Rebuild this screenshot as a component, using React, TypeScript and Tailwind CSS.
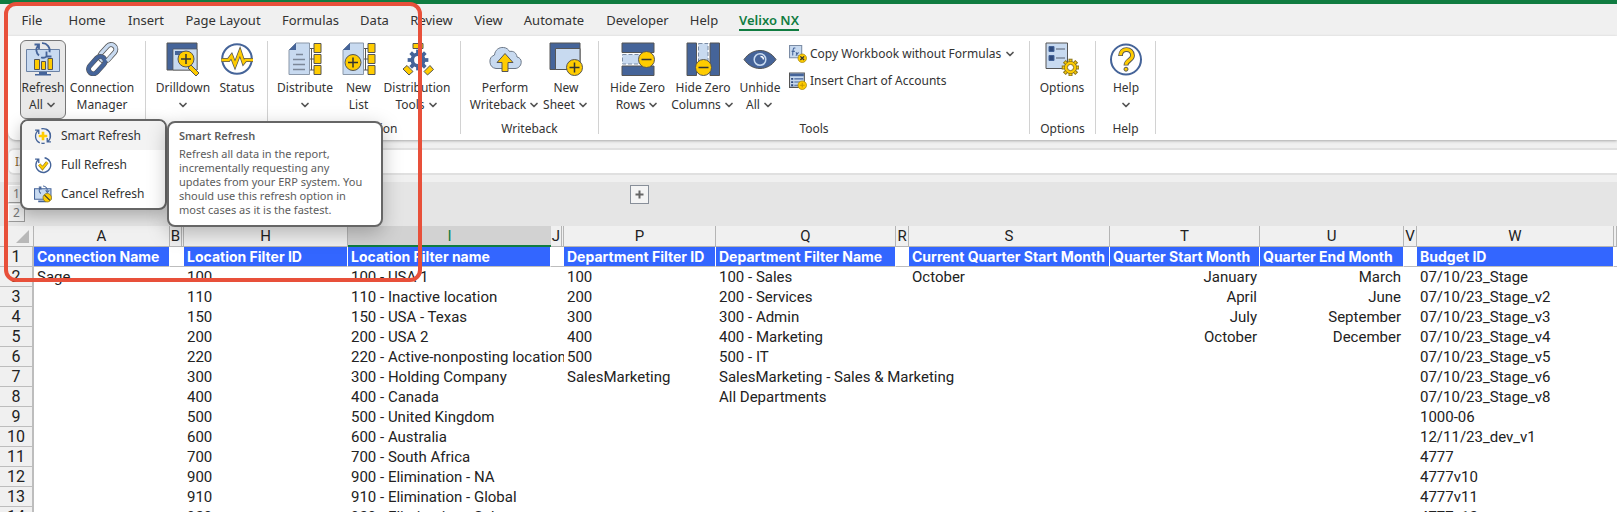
import { ChevronDown } from "lucide-react";
import type { ReactNode } from "react";

const BLUE = "#456499";
const LIGHT = "#c8daf0";
const YELLOW = "#ffcc00";
const LINE = "#555555";

const tabs = [
  { name: "File", width: "w-[48px]" },
  { name: "Home", width: "w-[62px]" },
  { name: "Insert", width: "w-[56px]" },
  { name: "Page Layout", width: "w-[98px]" },
  { name: "Formulas", width: "w-[77px]" },
  { name: "Data", width: "w-[51px]" },
  { name: "Review", width: "w-[63px]" },
  { name: "View", width: "w-[51px]" },
  { name: "Automate", width: "w-[80px]" },
  { name: "Developer", width: "w-[87px]" },
  { name: "Help", width: "w-[46px]" },
  { name: "Velixo NX", width: "w-[84px]", active: true },
];

// "hidden" marks a column that is followed by collapsed ones
const columns = [
  { letter: "A", width: "w-[136px]", title: "Connection Name" },
  { letter: "B", width: "w-[14px]", gap: true, hidden: true },
  { letter: "H", width: "w-[164px]", title: "Location Filter ID" },
  { letter: "I", width: "w-[203px]", title: "Location Filter name", selected: true },
  { letter: "J", width: "w-[13px]", gap: true, hidden: true },
  { letter: "P", width: "w-[152px]", title: "Department Filter ID" },
  { letter: "Q", width: "w-[180px]", title: "Department Filter Name" },
  { letter: "R", width: "w-[13px]", gap: true },
  { letter: "S", width: "w-[201px]", title: "Current Quarter Start Month" },
  { letter: "T", width: "w-[150px]", title: "Quarter Start Month", right: true },
  { letter: "U", width: "w-[144px]", title: "Quarter End Month", right: true },
  { letter: "V", width: "w-[13px]", gap: true },
  { letter: "W", width: "w-[197px]", title: "Budget ID" },
  { letter: "", width: "", gap: true },
];

const rows: Record<string, string>[] = [
  { A: "Sage", H: "100", I: "100 - USA 1", P: "100", Q: "100 - Sales", S: "October", T: "January", U: "March", W: "07/10/23_Stage" },
  { H: "110", I: "110 - Inactive location", P: "200", Q: "200 - Services", T: "April", U: "June", W: "07/10/23_Stage_v2" },
  { H: "150", I: "150 - USA - Texas", P: "300", Q: "300 - Admin", T: "July", U: "September", W: "07/10/23_Stage_v3" },
  { H: "200", I: "200 - USA 2", P: "400", Q: "400 - Marketing", T: "October", U: "December", W: "07/10/23_Stage_v4" },
  { H: "220", I: "220 - Active-nonposting location", P: "500", Q: "500 - IT", W: "07/10/23_Stage_v5" },
  { H: "300", I: "300 - Holding Company", P: "SalesMarketing", Q: "SalesMarketing - Sales & Marketing", W: "07/10/23_Stage_v6" },
  { H: "400", I: "400 - Canada", Q: "All Departments", W: "07/10/23_Stage_v8" },
  { H: "500", I: "500 - United Kingdom", W: "1000-06" },
  { H: "600", I: "600 - Australia", W: "12/11/23_dev_v1" },
  { H: "700", I: "700 - South Africa", W: "4777" },
  { H: "900", I: "900 - Elimination - NA", W: "4777v10" },
  { H: "910", I: "910 - Elimination - Global", W: "4777v11" },
  { H: "920", I: "920 - Elimination - Sub", W: "4777v12" },
];

const Svg = ({ size = 34, children }: { size?: number; children: ReactNode }) => (
  <svg width={size} height={size} viewBox="0 0 34 34" fill="none" aria-hidden="true" className="shrink-0">
    {children}
  </svg>
);

const Plus = ({ cx, cy, r = 8 }: { cx: number; cy: number; r?: number }) => (
  <g>
    <circle cx={cx} cy={cy} r={r} fill={YELLOW} stroke={LINE} />
    <path d={`M${cx - 5} ${cy}h10M${cx} ${cy - 5}v10`} stroke="#333" strokeWidth="1.5" />
  </g>
);

const Minus = ({ cx, cy }: { cx: number; cy: number }) => (
  <g>
    <circle cx={cx} cy={cy} r="8" fill={YELLOW} stroke={LINE} />
    <path d={`M${cx - 5} ${cy}h10`} stroke="#333" strokeWidth="1.5" />
  </g>
);

// two arcs with arrow heads, drawn inside a 34 unit box
const Arrows = ({ width = 2.5 }: { width?: number }) => (
  <g stroke={BLUE} strokeWidth={width}>
    <path d="M11 30A14 14 0 0 1 8 6.500M2 6h7v7" />
    <path d="M14 3.300A14 14 0 0 1 30.500 20" />
    <path d="M23 4A14 14 0 0 1 26 27.500M32 28h-7v-7" />
    <path d="M20 30.700A14 14 0 0 1 14 30.500" />
  </g>
);

const gearTeeth = [0, 45, 90, 135, 180, 225, 270, 315];

const Gear = ({ cx, cy, r, fill, stroke = "none" }: { cx: number; cy: number; r: number; fill: string; stroke?: string }) => (
  <g>
    {gearTeeth.map((a) => (
      <rect
        key={a}
        x={cx - r * 0.25}
        y={cy - r * 1.38}
        width={r * 0.5}
        height={r * 0.7}
        fill={fill}
        stroke={stroke}
        transform={`rotate(${a} ${cx} ${cy})`}
      />
    ))}
    <circle cx={cx} cy={cy} r={r} fill={fill} stroke={stroke} />
    <circle cx={cx} cy={cy} r={r * 0.9} fill={fill} />
    <circle cx={cx} cy={cy} r={r * 0.52} fill="#fff" stroke={stroke} />
  </g>
);

const RefreshAllIcon = () => (
  <Svg>
    <path d="M.5 7.500h33v22H.5z" fill={LIGHT} stroke="#6b82a5" />
    <path d="M13 30h8v3h-8zM9 32h16v1.500H9z" fill={BLUE} />
    <path d="M8.500 17.500h5v10h-5zM15.500 19.500h4v8h-4zM22 16.500h4.500v11H22z" fill={YELLOW} stroke={LINE} />
    <path d="M13 13.500a7 7 0 0 1-1-10M8.500 2.500h4.500v4.500M16 1.200a7.300 7.300 0 0 1 7.500 9M20 14.500h4.500M20.500 9.500v5h5M15 15.500a7 7 0 0 0 5-.500" stroke={BLUE} strokeWidth="1.800" />
  </Svg>
);

const LinkIcon = () => (
  <Svg>
    <g transform="rotate(42 17 17)" fill="none">
      <rect x="12.500" y="-1" width="9.500" height="19" rx="4.750" stroke={LINE} strokeWidth="5" />
      <rect x="12.500" y="-1" width="9.500" height="19" rx="4.750" stroke={LIGHT} strokeWidth="3.400" />
      <rect x="12.500" y="15" width="9.500" height="20" rx="4.750" stroke={LINE} strokeWidth="5" />
      <rect x="12.500" y="15" width="9.500" height="20" rx="4.750" stroke={BLUE} strokeWidth="4" />
      <path d="M22 9v6" stroke={LIGHT} strokeWidth="3.400" />
    </g>
  </Svg>
);

const DrilldownIcon = () => (
  <Svg>
    <path d="M1 1h30v27H1z" fill={BLUE} stroke={LINE} />
    <path d="M7 7h24v21H7z" fill={LIGHT} stroke={LINE} strokeWidth=".7" />
    <path d="M9 9h11v4H9z" fill={BLUE} />
    <path d="m25 23 8 8-3 3-8-8z" fill={YELLOW} stroke={LINE} />
    <Plus cx={20} cy={17} />
  </Svg>
);

const StatusIcon = () => (
  <Svg>
    <circle cx="17" cy="17" r="14.800" fill="#fff" stroke={BLUE} strokeWidth="2" />
    <path d="M1.500 18h7l3-4 3.500 9 5-13 3.500 10.500 2-2.500H33" stroke={LINE} strokeWidth="4" />
    <path d="M1.500 18h7l3-4 3.500 9 5-13 3.500 10.500 2-2.500H33" stroke={YELLOW} strokeWidth="2.500" />
  </Svg>
);

const Sheet = () => (
  <g>
    <path d="M8 1h13.500v31.500H1V8z" fill={LIGHT} stroke="#8a97a8" />
    <path d="M8 1v7H1z" fill={BLUE} />
    <path d="M22 6.500h5M22 17h5M22 28h5M23.500 6.500V28" stroke={LINE} />
    <path d="M26 1.500h7v9h-7zM26 12.500h7v9h-7zM26 23.500h7v9h-7z" fill={YELLOW} stroke={LINE} />
  </g>
);

const DistributeIcon = () => (
  <Svg>
    <Sheet />
    <path d="M8 12.500h7M5 17.500h12M5 22.500h12M5 27.500h12" stroke="#7b8798" strokeWidth="1.400" />
  </Svg>
);

const NewListIcon = () => (
  <Svg>
    <Sheet />
    <Plus cx={11} cy={20.500} />
  </Svg>
);

const DistToolsIcon = () => (
  <Svg>
    <Gear cx={18} cy={18} r={7.500} fill={BLUE} />
    <path d="M13 1.500h10v5H13z" fill={YELLOW} stroke={LINE} />
    <path d="m3 27 4-3.500 6 6L9 33zM24 29.500l6-6 3.500 4-6 5.500z" fill={YELLOW} stroke={LINE} />
  </Svg>
);

const CloudIcon = () => (
  <Svg>
    <path d="M8 26.500a7 7 0 0 1-1.500-13.500C7 8 11 5 15.500 5.500c3 .2 5 2 6 4 4-1 7 1.500 7.500 5.500 3 .5 4.500 3 4.200 5.500-.2 3.500-3 6-6.200 6z" fill={LIGHT} stroke="#6b7787" />
    <path d="m17 11.500 8 9h-5v9h-6v-9H9z" fill={YELLOW} stroke={LINE} />
  </Svg>
);

const NewSheetIcon = () => (
  <Svg>
    <path d="M1 1h30v26.500H1z" fill={BLUE} stroke={LINE} />
    <path d="M6.500 6.500H31v21H6.500z" fill={LIGHT} stroke={LINE} />
    <Plus cx={25.500} cy={25.500} />
  </Svg>
);

const HideRowsIcon = () => (
  <Svg>
    <path d="M1 1h32v9.500H1zM1 24h32v9.500H1z" fill={BLUE} stroke={LINE} />
    <path d="M1.500 12.500h24v9.500h-24z" fill={LIGHT} stroke="#7b8ca5" strokeDasharray="4 2" />
    <Minus cx={25.500} cy={17.500} />
  </Svg>
);

const HideColsIcon = () => (
  <Svg>
    <path d="M1 1h9.500v32.500H1zM24 1h9.500v32.500H24z" fill={BLUE} stroke={LINE} />
    <path d="M12.500 1.500H22v24h-9.500z" fill={LIGHT} stroke="#7b8ca5" strokeDasharray="4 2" />
    <Minus cx={17.500} cy={25.500} />
  </Svg>
);

const EyeIcon = () => (
  <Svg>
    <path d="M1 17.500C9 5.500 25 5.500 33 17.500 25 29.500 9 29.500 1 17.500z" fill={BLUE} stroke={LINE} />
    <circle cx="17" cy="17.500" r="5.800" stroke={LIGHT} strokeWidth="1.500" />
    <path d="M17.500 14.500a3 3 0 0 1 3 3" stroke="#fff" strokeWidth="1.500" />
  </Svg>
);

const OptionsIcon = () => (
  <Svg>
    <path d="M1 1h21.500v25.500H1z" fill={LIGHT} stroke={LINE} />
    <path d="M4 4.500h5v5H4zM4 13.500h5v5H4z" fill="#2f4a7c" stroke={BLUE} />
    <path d="M11 7h9M11 16h9" stroke="#7b8798" strokeWidth="1.300" />
    <Gear cx={25.500} cy={25.500} r={6} fill={YELLOW} stroke="#8a7620" />
  </Svg>
);

const HelpIcon = () => (
  <Svg>
    <circle cx="17" cy="17.500" r="15" fill="#fff" stroke={BLUE} strokeWidth="2" />
    <path d="M11.500 14c0-8.500 12-8.500 12-.5 0 5-6.500 4.500-6.500 10" stroke={LINE} strokeWidth="4.800" />
    <path d="M11.500 13.300c0-7.800 12-7.800 12 .2 0 5-6.500 4.500-6.500 9.300" stroke={YELLOW} strokeWidth="3" />
    <circle cx="17" cy="27.200" r="2" fill={YELLOW} stroke={LINE} />
  </Svg>
);

const CopyIcon = () => (
  <Svg size={18}>
    <path d="M1 1h23v23H1z" fill={LIGHT} stroke="#7b8ca5" strokeWidth="2" />
    <path d="M12 6c-4-2-5 3-5 14M5 12h6M13 14l5 6M18 14l-5 6" stroke={BLUE} strokeWidth="2" />
    <circle cx="25" cy="25" r="8" fill={YELLOW} stroke="#a88a10" strokeWidth="1.500" />
    <path d="m21.500 21.500 7 7M28.500 21.500l-7 7" stroke="#333" strokeWidth="2.500" />
  </Svg>
);

const InsertChartIcon = () => (
  <Svg size={18}>
    <path d="M1 2h28v27H1z" fill={LIGHT} stroke={LINE} strokeWidth="2" />
    <path d="M2 3h26v5H2z" fill={BLUE} />
    <path d="M4 13h4M4 19h4M4 25h4" stroke="#2f4a7c" strokeWidth="3.500" />
    <path d="M10 13h17M10 19h17M10 25h17" stroke={BLUE} strokeWidth="2" />
    <circle cx="25" cy="25" r="8" fill={YELLOW} stroke="#a88a10" strokeWidth="1.500" />
    <path d="M25 20.500v9M20.500 25h9" stroke="#c79a00" strokeWidth="2" />
  </Svg>
);

const SmartRefreshIcon = () => (
  <Svg size={18}>
    <Arrows />
    <path d="M17 9v16M9 17h16" stroke={YELLOW} strokeWidth="5" />
  </Svg>
);

const FullRefreshIcon = () => (
  <Svg size={18}>
    <path d="M9 6A14 14 0 1 0 20 3.300M2 6h7v7" stroke={BLUE} strokeWidth="2.500" />
    <path d="m10 16 6 7 9-11" stroke="#8a7620" strokeWidth="6" />
    <path d="m10 16 6 7 9-11" stroke={YELLOW} strokeWidth="4" />
  </Svg>
);

const CancelRefreshIcon = () => (
  <Svg size={18}>
    <path d="M1 7h31v20H1z" fill={LIGHT} stroke={BLUE} strokeWidth="2" />
    <path d="M8 31h15" stroke={BLUE} strokeWidth="3" />
    <path d="M13 16a7 7 0 0 1-1-11M9 4h4v5M17 2a8 8 0 0 1 8 9M22 10l3 4 4-4" stroke={BLUE} strokeWidth="2" />
    <circle cx="25" cy="24" r="8" fill={YELLOW} stroke="#8a7620" strokeWidth="1.500" />
    <path d="m20 19 10 10" stroke="#333" strokeWidth="2" />
  </Svg>
);

const Chevron = () => <ChevronDown size={12} strokeWidth={3.500} className="shrink-0 text-[#555]" />;

type BigButtonProps = {
  icon: ReactNode;
  top: string;
  bottom?: string;
  menu?: boolean;
  width: string;
  pressed?: boolean;
};

const BigButton = ({ icon, top, bottom, menu, width, pressed }: BigButtonProps) => (
  <button
    type="button"
    className={`${width} h-[79px] shrink-0 flex flex-col items-center pt-px rounded-md border whitespace-nowrap text-[12px] leading-[17px] ${
      pressed ? "bg-[#e9e9e9] border-[#777]" : "border-transparent"
    }`}
  >
    {icon}
    <span className="mt-[3px]">{top}</span>
    <span className="h-[17px] flex items-center gap-0.5">
      {bottom}
      {menu && <Chevron />}
    </span>
  </button>
);

const Group = ({ label, width, children }: { label?: string; width: string; children: ReactNode }) => (
  <>
    <section className={`${width} h-[97px] shrink-0 flex flex-col`}>
      <div className="flex pl-[7px]">{children}</div>
      <div className="mt-auto text-center text-[12px] leading-4">{label}</div>
    </section>
    <div className="w-px h-[93px] mt-px shrink-0 bg-[#d2d2d2]" />
  </>
);

const menuItems = [
  { label: "Smart Refresh", icon: <SmartRefreshIcon />, active: true },
  { label: "Full Refresh", icon: <FullRefreshIcon /> },
  { label: "Cancel Refresh", icon: <CancelRefreshIcon /> },
];

const RefreshMenu = () => (
  <div className="absolute left-0 top-[79px] z-20 flex items-start">
    <ul className="w-[147px] rounded-lg border-2 border-[#666] bg-white overflow-hidden shadow-[0_6px_16px_rgba(0,0,0,0.25)]">
      {menuItems.map((item) => (
        <li key={item.label}>
          <button
            type="button"
            className={`w-full h-[29px] pl-3 flex items-center gap-[9px] text-[12px] whitespace-nowrap ${
              item.active ? "bg-[#f3f3f3]" : ""
            }`}
          >
            {item.icon}
            {item.label}
          </button>
        </li>
      ))}
    </ul>
    <div
      role="tooltip"
      className="w-[216px] h-[106px] mt-0.5 pl-[10px] pt-[5px] rounded-lg border-2 border-[#666] bg-white text-[11px] text-[#5c5c5c] whitespace-nowrap shadow-[0_6px_20px_rgba(0,0,0,0.25)]"
    >
      <p className="font-semibold leading-4">Smart Refresh</p>
      <p className="mt-[3px] leading-[14px]">
        Refresh all data in the report,
        <br />
        incrementally requesting any
        <br />
        updates from your ERP system. You
        <br />
        should use this refresh option in
        <br />
        most cases as it is the fastest.
      </p>
    </div>
  </div>
);

const Ribbon = () => (
  <div className="ml-2 h-[104px] pt-1 flex bg-white rounded-bl-lg shadow-[0_1px_3px_rgba(0,0,0,0.3)]">
    <Group width="w-[137px]">
      <div className="relative ml-[5px]">
        <BigButton icon={<RefreshAllIcon />} top="Refresh" bottom="All" menu pressed width="w-[46px]" />
        <RefreshMenu />
      </div>
      <BigButton icon={<LinkIcon />} top="Connection" bottom="Manager" width="w-[72px]" />
    </Group>
    <Group width="w-[121px]">
      <BigButton icon={<DrilldownIcon />} top="Drilldown" menu width="w-[60px]" />
      <BigButton icon={<StatusIcon />} top="Status" width="w-[48px]" />
    </Group>
    <Group width="w-[192px]" label="Distribution">
      <BigButton icon={<DistributeIcon />} top="Distribute" menu width="w-[60px]" />
      <BigButton icon={<NewListIcon />} top="New" bottom="List" width="w-[47px]" />
      <BigButton icon={<DistToolsIcon />} top="Distribution" bottom="Tools" menu width="w-[70px]" />
    </Group>
    <Group width="w-[137px]" label="Writeback">
      <BigButton icon={<CloudIcon />} top="Perform" bottom="Writeback" menu width="w-[74px]" />
      <BigButton icon={<NewSheetIcon />} top="New" bottom="Sheet" menu width="w-[48px]" />
    </Group>
    <Group width="w-[430px]" label="Tools">
      <BigButton icon={<HideRowsIcon />} top="Hide Zero" bottom="Rows" menu width="w-[63px]" />
      <BigButton icon={<HideColsIcon />} top="Hide Zero" bottom="Columns" menu width="w-[68px]" />
      <BigButton icon={<EyeIcon />} top="Unhide" bottom="All" menu width="w-[46px]" />
      <div className="flex flex-col ml-1.5 text-[12px] whitespace-nowrap">
        <button type="button" className="h-[27px] flex items-center gap-[3px]">
          <CopyIcon />
          Copy Workbook without Formulas
          <Chevron />
        </button>
        <button type="button" className="h-[27px] flex items-center gap-[3px]">
          <InsertChartIcon />
          Insert Chart of Accounts
        </button>
      </div>
    </Group>
    <Group width="w-[65px]" label="Options">
      <BigButton icon={<OptionsIcon />} top="Options" width="w-[50px]" />
    </Group>
    <Group width="w-[59px]" label="Help">
      <BigButton icon={<HelpIcon />} top="Help" menu width="w-[46px]" />
    </Group>
  </div>
);

const OutlineBar = () => (
  <div className="h-[44px] bg-[#e5e5e5] pl-2 pt-[3px] flex items-start text-xs text-[#777]">
    <div className="flex flex-col gap-px">
      <button type="button" className="w-[17px] h-[18px] border border-t-white border-l-white border-b-[#999] border-r-[#999] bg-[#eee]">
        1
      </button>
      <button type="button" className="w-[17px] h-[18px] border border-t-white border-l-white border-b-[#999] border-r-[#999] bg-[#eee]">
        2
      </button>
    </div>
    <button
      type="button"
      aria-label="Expand columns"
      className="ml-[605px] w-[19px] h-[19px] flex items-center justify-center border border-[#888f99] bg-[#f4f4f4]"
    >
      <svg width="9" height="9" viewBox="0 0 9 9" aria-hidden="true">
        <path d="M4.500 0.500v8M0.500 4.500h8" stroke="#666" strokeWidth="2" />
      </svg>
    </button>
  </div>
);

const SheetGrid = () => (
  <table className="w-full table-fixed border-separate border-spacing-0 bg-white font-[Roboto,sans-serif] text-[15px] text-[#222]">
    <colgroup>
      <col className="w-[34px]" />
      {columns.map((c) => (
        <col key={c.letter} className={c.width} />
      ))}
    </colgroup>
    <thead>
      <tr className="h-[21px] bg-[#f0f0f0] leading-[18px]">
        <td className="p-0 border-b border-r border-[#b5b5b5]">
          <svg width="13" height="13" viewBox="0 0 13 13" aria-hidden="true" className="ml-auto mr-1">
            <path d="M13 0v13H0z" fill="#b8b8b8" />
          </svg>
        </td>
        {columns.map((c) => (
          <th
            key={c.letter}
            scope="col"
            className={`p-0 font-normal text-center ${
              c.selected
                ? "bg-[#d2d2d2] text-[#107c41] border-b-2 border-[#107c41]"
                : c.hidden
                  ? "border-b border-r-3 border-[#b5b5b5] [border-right-style:double]"
                  : "border-b border-r border-[#b5b5b5]"
            }`}
          >
            {c.letter}
          </th>
        ))}
      </tr>
    </thead>
    <tbody>
      <tr className="h-5 leading-[18px]">
        <th scope="row" className="p-0 font-normal text-[16px] bg-[#f0f0f0] border-b border-r-2 border-[#bdbdbd]">
          1
        </th>
        {columns.map((c) => (
          <td
            key={c.letter}
            className={`p-0 pl-[3px] whitespace-nowrap overflow-hidden border-b border-[#bdbdbd] ${
              c.gap ? "" : "bg-[#3366ff] font-[Inter,sans-serif] font-bold text-[14px] text-white border-r border-r-white"
            }`}
          >
            {c.title}
          </td>
        ))}
      </tr>
      {rows.map((row, i) => (
        <tr key={row.H} className="h-5 leading-[18px]">
          <th scope="row" className="p-0 font-normal text-[16px] bg-[#f0f0f0] border-b border-r-2 border-[#bdbdbd]">
            {i + 2}
          </th>
          {columns.map((c) => (
            <td
              key={c.letter}
              className={`p-0 whitespace-nowrap ${c.right ? "text-right pr-[3px]" : "pl-[3px]"} ${
                c.letter === "P" ? "relative bg-white" : ""
              }`}
            >
              {row[c.letter]}
            </td>
          ))}
        </tr>
      ))}
    </tbody>
  </table>
);

const App = () => {
  return (
    <div className="relative h-screen overflow-hidden bg-[#f0f0f0] text-[#333] font-['Noto_Sans',sans-serif]">
      <div className="h-1 bg-[#107c41]" />
      <nav className="h-8 pl-2 flex items-start text-[13px]">
        {tabs.map((tab) => (
          <button
            key={tab.name}
            type="button"
            className={`${tab.width} shrink-0 flex justify-center whitespace-nowrap ${
              tab.active ? "text-[#107c41] font-semibold" : ""
            }`}
          >
            <span className={`pt-[7px] leading-[18px] ${tab.active ? "border-b-2 border-[#107c41]" : ""}`}>
              {tab.name}
            </span>
          </button>
        ))}
      </nav>
      <div className="relative z-10">
        <Ribbon />
      </div>
      <div className="mt-2 ml-2 h-[27px] flex items-center bg-white border-y-2 border-l border-[#e0e0e0] rounded-l-md">
        <input
          aria-label="Name box"
          defaultValue="I3"
          className="w-12 pl-1.5 text-xs text-[#8a6a3a] bg-transparent outline-none"
        />
        <input aria-label="Formula bar" className="flex-1 text-xs bg-transparent outline-none" />
      </div>
      <div className="h-[7px]" />
      <OutlineBar />
      <SheetGrid />
      <div className="absolute left-1 top-0.5 z-30 w-[418px] h-[280px] border-4 border-[#e8503a] rounded-xl pointer-events-none" />
    </div>
  );
};

export default App;
